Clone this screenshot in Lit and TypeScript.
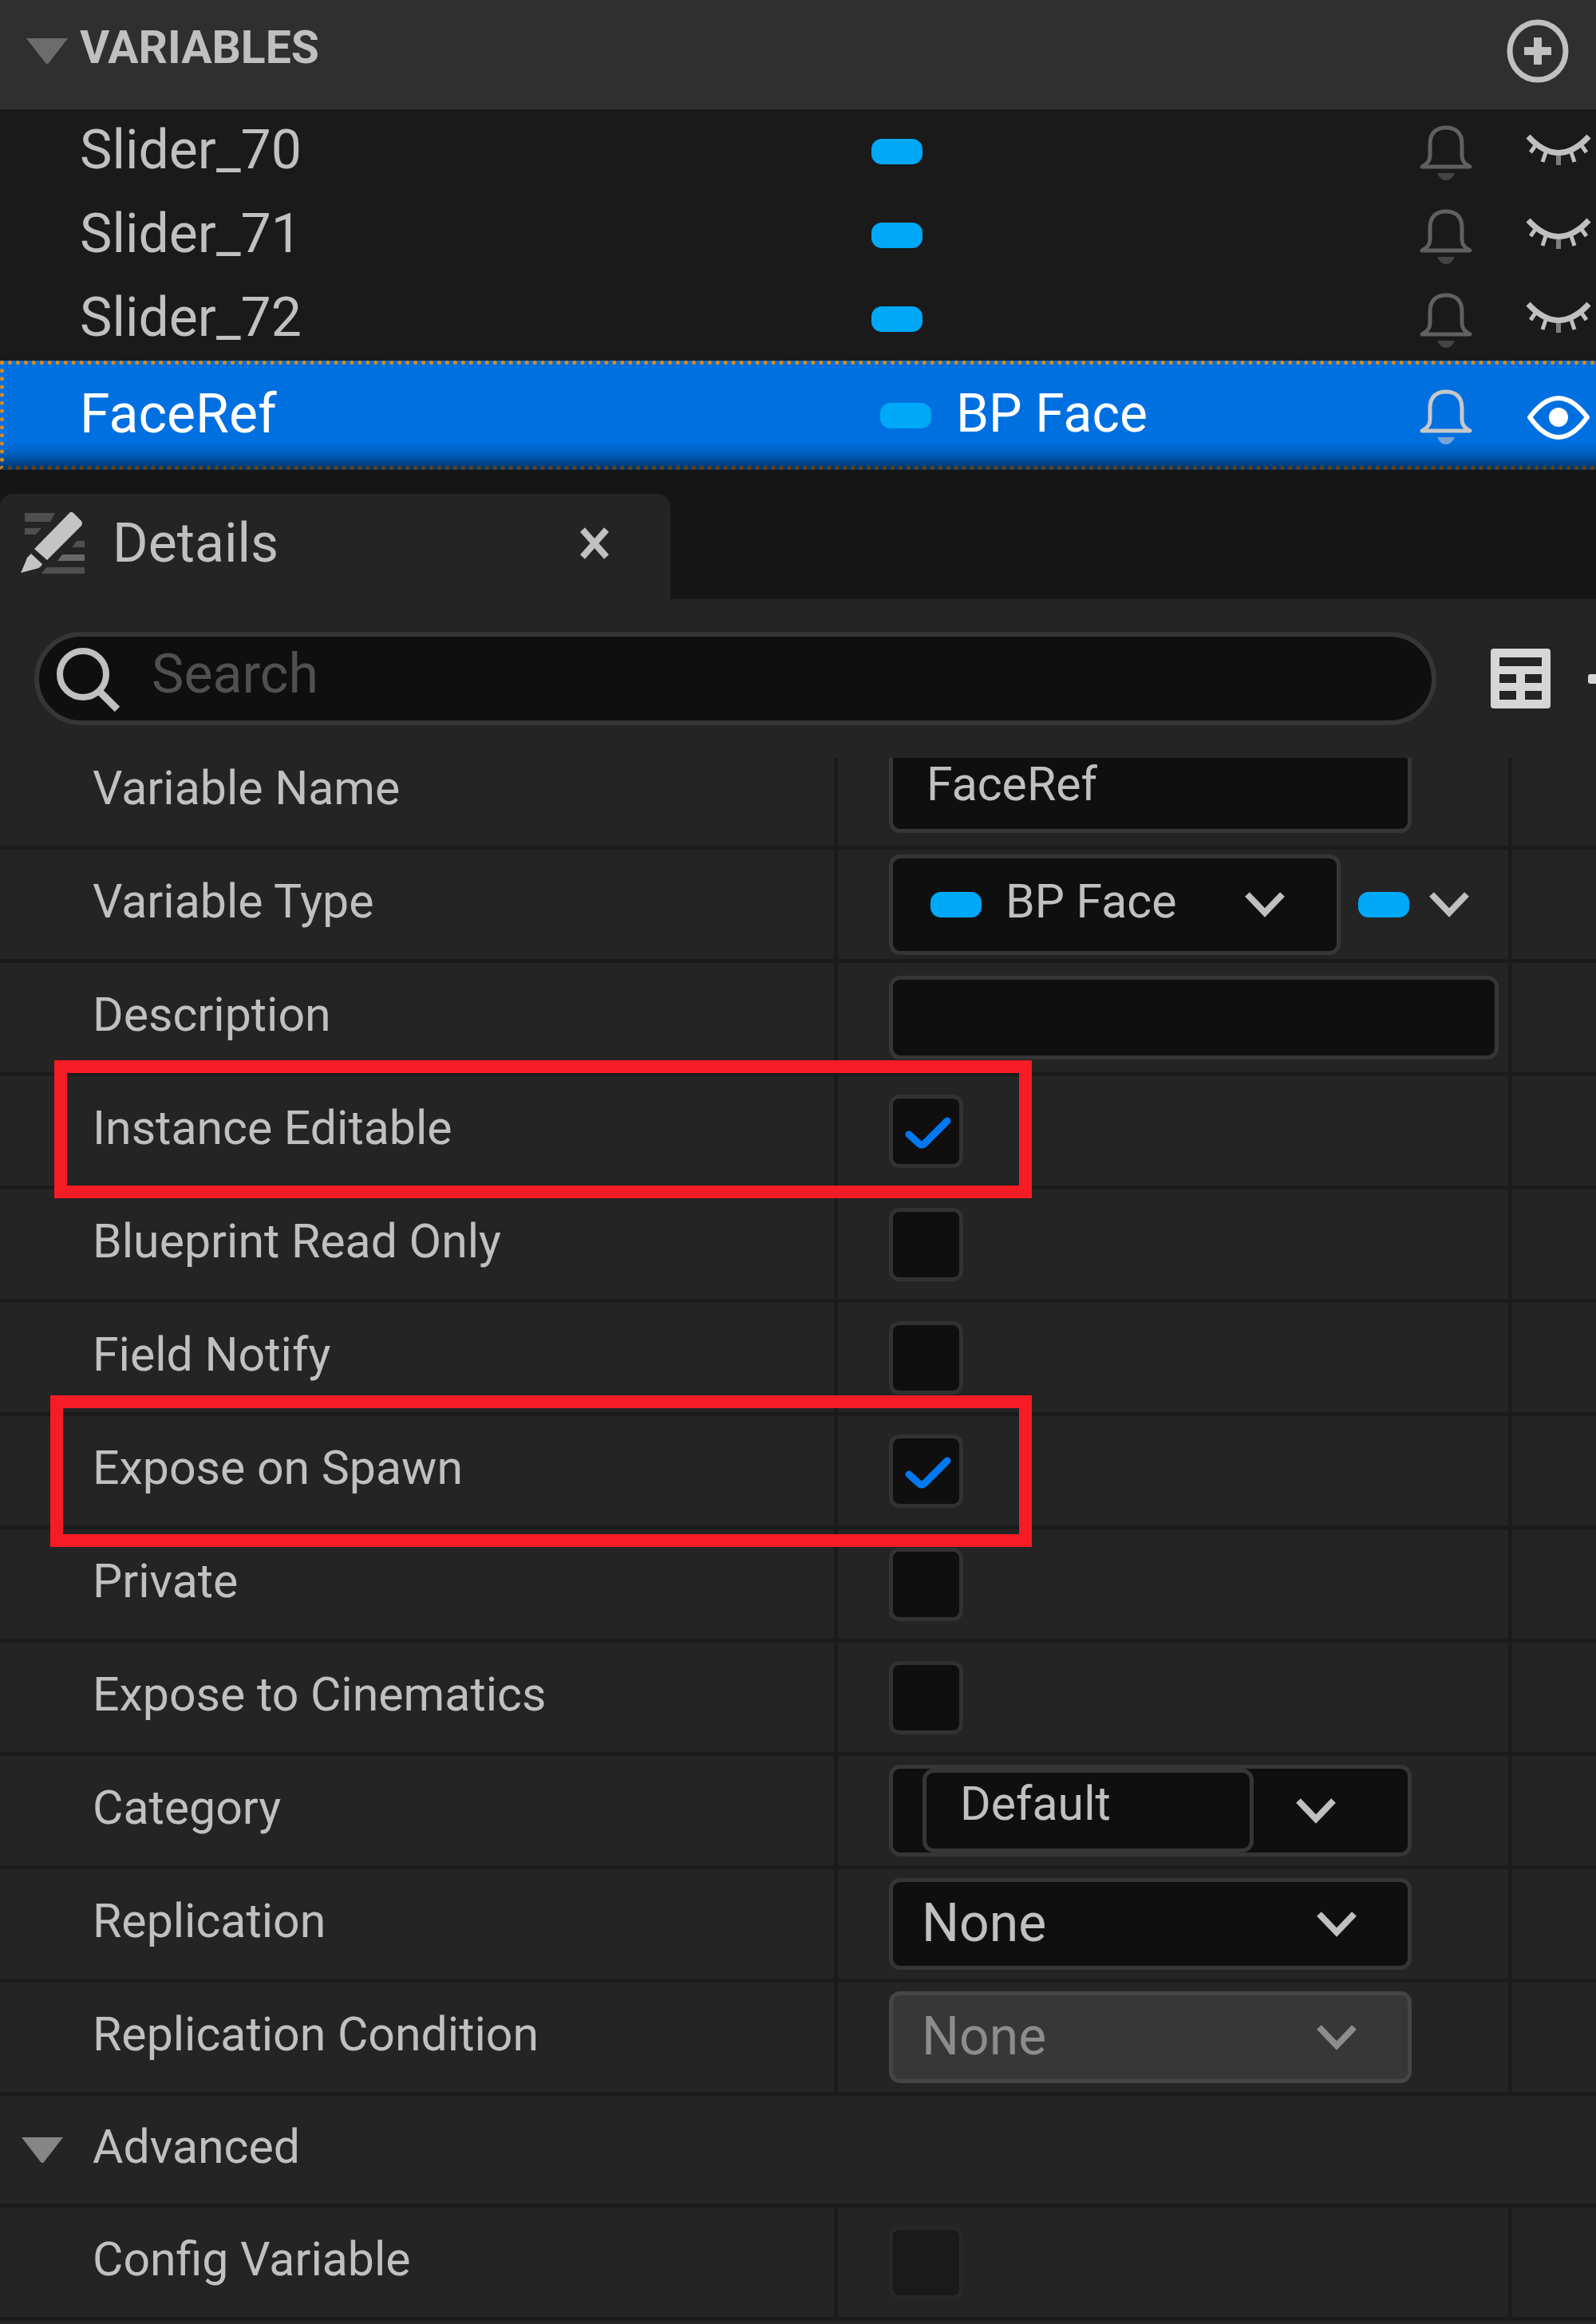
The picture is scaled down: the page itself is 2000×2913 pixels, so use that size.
import { LitElement, html, css, svg, nothing, type TemplateResult } from "lit";
import { customElement, state } from "lit/decorators.js";
import { classMap } from "lit/directives/class-map.js";

interface Variable {
  name: string;
  type?: string;
  visible: boolean;
}

interface Toggle {
  id: string;
  label: string;
  checked: boolean;
  mark?: "first" | "second";
}

const VARIABLES: Variable[] = [
  { name: "Slider_70", visible: false },
  { name: "Slider_71", visible: false },
  { name: "Slider_72", visible: false },
  { name: "FaceRef", type: "BP Face", visible: true },
];

const TOGGLES: Toggle[] = [
  { id: "instance-editable", label: "Instance Editable", checked: true, mark: "first" },
  { id: "read-only", label: "Blueprint Read Only", checked: false },
  { id: "field-notify", label: "Field Notify", checked: false },
  { id: "expose-spawn", label: "Expose on Spawn", checked: true, mark: "second" },
  { id: "private", label: "Private", checked: false },
  { id: "expose-cinematics", label: "Expose to Cinematics", checked: false },
];

const triangle = html`<svg class="triangle" viewBox="0 0 56 34" aria-hidden="true">
  <path d="M2 1H54L30 32Q28 34 26 32Z" fill="currentColor" />
</svg>`;

const chevron = html`<svg class="chevron" viewBox="0 0 52 34" aria-hidden="true">
  <path d="M4 4L26 27L48 4" fill="none" stroke="currentColor" stroke-width="8" />
</svg>`;

const plusCircle = html`<svg class="plus" viewBox="0 0 78 80" aria-hidden="true">
  <ellipse cx="39" cy="40" rx="35" ry="36" fill="none" stroke="currentColor" stroke-width="7" />
  <path d="M22 40H56M39 23V57" stroke="currentColor" stroke-width="10" />
</svg>`;

const bell = html`<svg class="bell" viewBox="0 0 66 74" aria-hidden="true">
  <path
    d="M3 56Q13 51 13 42V28C13 13 21 7 33 7S53 13 53 28V42Q53 51 63 56Z"
    fill="none" stroke="currentColor" stroke-width="5" stroke-linejoin="round" />
  <path d="M22 64H44Q40 73 33 73T22 64Z" fill="currentColor" opacity="0.6" />
</svg>`;

const eyeShut = html`<svg class="eye" viewBox="0 0 82 74" aria-hidden="true">
  <g fill="none" stroke="currentColor">
    <path d="M3 18Q41 59 79 18" stroke-width="7" />
    <path d="M13 28L6 38M69 28L76 38M25 38L21 50M57 38L61 50" stroke-width="5" />
    <path d="M41 40V54" stroke-width="6" opacity="0.6" />
  </g>
</svg>`;

const eyeOpen = html`<svg class="eye" viewBox="0 0 82 74" aria-hidden="true">
  <path d="M5 39Q23 15 41 15T77 39Q59 64 41 64T5 39Z" fill="none" stroke="currentColor" stroke-width="6" stroke-linejoin="round" />
  <circle cx="41" cy="39" r="12" fill="currentColor" />
</svg>`;

const pencil = html`<svg class="pencil" viewBox="0 0 80 80" aria-hidden="true">
  <g fill="#4f4f4f">
    <path d="M5 2H43L37 13H5Z" />
    <path d="M5 21H26L19 29H5Z" />
    <path d="M70 37H80V45H64Z" />
    <path d="M52 54H80V62H46Z" fill="#686868" />
    <path d="M32 70H80V78H26Z" />
  </g>
  <path d="M62 1Q64 0 66 2L76 12Q78 15 76 18L33 61L17 47Z" fill="#c4c4c4" />
  <path d="M13 53L27 66Q25 71 19 72L0 77Q5 66 8 58Z" fill="#c4c4c4" />
</svg>`;

const cross = html`<svg class="cross" viewBox="0 0 38 42" aria-hidden="true">
  <path d="M4 4L34 38M34 4L4 38" stroke="currentColor" stroke-width="8" />
</svg>`;

const lens = html`<svg class="lens" viewBox="0 0 80 82" aria-hidden="true">
  <circle cx="33" cy="35" r="29" fill="none" stroke="currentColor" stroke-width="8" />
  <path d="M53 56L76 79" stroke="currentColor" stroke-width="9" />
</svg>`;

const tableIcon = html`<svg class="table-icon" viewBox="0 0 75 75" aria-hidden="true">
  <path
    fill="currentColor" fill-rule="evenodd"
    d="M4 0H71Q75 0 75 4V71Q75 75 71 75H4Q0 75 0 71V4Q0 0 4 0ZM11 11V22H64V11ZM11 32V43H32V32ZM43 32V43H64V32ZM11 53V64H32V53ZM43 53V64H64V53Z" />
</svg>`;

const teeth = [0, 45, 90, 135, 180, 225, 270, 315];
const gear = html`<svg class="gear" viewBox="0 0 76 76" aria-hidden="true">
  ${teeth.map((a) => svg`<rect x=${a % 90 ? 5 : 0} y="32" width="16" height="12" rx="3" fill="currentColor" transform="rotate(${a} 38 38)" />`)}
  <circle cx="38" cy="38" r="20" fill="none" stroke="currentColor" stroke-width="12" />
</svg>`;

const tick = html`<svg class="tick" viewBox="0 0 93 92" aria-hidden="true">
  <path d="M25 50L37 61Q41 65 45 61L73 33" fill="none" stroke="currentColor" stroke-width="9" stroke-linecap="round" stroke-linejoin="round" />
</svg>`;

@customElement("app-root")
export class AppRoot extends LitElement {
  @state() private selected = "FaceRef";
  @state() private toggles = TOGGLES;

  static styles = css`
    :host {
      display: block;
      min-height: 100vh;
      overflow: hidden;
      background: #242424;
      color: #c0c0c0;
      font-family: Roboto, "Liberation Sans", sans-serif;
      font-size: 59px;
      line-height: 72px;
    }
    * {
      box-sizing: border-box;
    }
    button,
    input,
    select {
      margin: 0;
      padding: 0;
      border: 0;
      background: none;
      color: inherit;
      font: inherit;
      outline: none;
      appearance: none;
    }
    svg {
      display: block;
      flex: none;
    }
    h2 {
      margin: 0;
      font: inherit;
    }

    /* Variables list */
    .section-head {
      display: flex;
      align-items: center;
      justify-content: space-between;
      height: 137px;
      padding: 0 34px 10px 31px;
      background: #2f2f2f;
    }
    .section-toggle {
      display: flex;
      align-items: center;
      gap: 13px;
      font-size: 57px;
      font-weight: 700;
    }
    .section-toggle .title {
      padding-bottom: 7px;
    }
    .triangle {
      width: 56px;
      height: 34px;
      color: #6c6c6c;
    }
    .plus {
      width: 78px;
      height: 80px;
    }
    .variables {
      margin: 0;
      padding: 0;
      list-style: none;
      background: #1a1a1a;
      font-size: 68px;
    }
    .variable {
      position: relative;
      display: grid;
      grid-template-columns: minmax(0, 1092fr) minmax(0, 687fr) minmax(0, 221fr);
      align-items: center;
      height: 105px;
    }
    .variable .name {
      padding: 0 0 4px 100px;
      text-align: left;
    }
    .kind {
      display: flex;
      align-items: center;
      gap: 31px;
    }
    .kind .kind-name {
      padding-bottom: 4px;
      font-size: 66px;
    }
    .flags {
      display: flex;
      justify-content: space-between;
      padding-right: 6px;
    }
    .bell {
      width: 66px;
      height: 74px;
      color: #606060;
    }
    .eye {
      width: 82px;
      height: 74px;
    }
    .pill {
      flex: none;
      width: 64px;
      height: 32px;
      border-radius: 13px;
      background: #00a8f8;
    }
    .variable.selected {
      height: 137px;
      background: linear-gradient(#0070e0 0, #0070e0 74%, #0062c4 84%, #003f80 96%, #003468 100%);
      color: #fff;
    }
    .variable.selected::after {
      content: "";
      position: absolute;
      inset: 0;
      border: 5px dotted #e08a12;
      border-right: 0;
      border-bottom-color: #6b430c;
      pointer-events: none;
    }
    .selected .kind {
      padding-left: 11px;
    }
    .selected .bell {
      color: #c6c8cc;
    }

    /* Tab strip */
    .tabs {
      padding-top: 30px;
      background: #151515;
    }
    .tab {
      display: flex;
      align-items: center;
      width: 42%;
      height: 132px;
      padding: 0 76px 8px 26px;
      border-radius: 16px 16px 0 0;
      background: #242424;
      font-size: 68px;
    }
    .tab .title {
      flex: 1;
      padding-left: 35px;
    }
    .pencil {
      width: 80px;
      height: 80px;
    }
    .cross {
      width: 38px;
      height: 42px;
    }

    /* Search bar */
    .tools {
      display: flex;
      align-items: center;
      padding: 41px 0 41px 43px;
    }
    .search {
      display: flex;
      flex: 1;
      align-items: center;
      gap: 39px;
      height: 117px;
      padding: 0 40px 0 22px;
      border: 6px solid #363636;
      border-radius: 59px;
      background: #0f0f0f;
    }
    .search input {
      flex: 1;
      min-width: 0;
      height: 100%;
      padding-bottom: 12px;
      font-size: 68px;
    }
    .search input::placeholder {
      color: #505050;
      opacity: 1;
    }
    .lens {
      width: 80px;
      height: 82px;
    }
    .tool {
      margin-left: 68px;
      color: #d6d6d6;
    }
    .tool-edge {
      margin: 0 -66px 0 47px;
      color: #d6d6d6;
    }
    .table-icon {
      width: 75px;
      height: 75px;
    }
    .gear {
      width: 76px;
      height: 76px;
    }

    /* Property rows */
    .properties {
      overflow: hidden;
    }
    .row {
      position: relative;
      display: grid;
      grid-template-columns: minmax(0, 1050fr) minmax(0, 845fr) minmax(0, 105fr);
      height: 142px;
      border-bottom: 5px solid #1b1b1b;
    }
    .row.scrolled {
      margin-top: -27px;
    }
    .caption,
    .value {
      display: flex;
      align-items: center;
      border-right: 5px solid #1b1b1b;
    }
    .caption {
      padding: 0 0 8px 116px;
    }
    .value {
      gap: 22px;
      padding: 0 12px 0 64px;
    }
    .field {
      width: 655px;
      height: 105px;
      padding: 0 42px 18px;
      border: 5px solid #363636;
      border-radius: 14px;
      background: #0f0f0f;
    }
    .field.wide {
      width: 100%;
    }
    .picker {
      display: flex;
      align-items: center;
      width: 566px;
      height: 126px;
      padding: 0 64px 0 47px;
      border: 5px solid #363636;
      border-radius: 14px;
      background: #0f0f0f;
    }
    .picker .picked {
      flex: 1;
      padding: 0 0 8px 30px;
      text-align: left;
    }
    .container-picker {
      display: flex;
      align-items: center;
      gap: 24px;
    }
    .chevron {
      width: 52px;
      height: 34px;
    }
    .combo {
      display: flex;
      align-items: center;
      width: 655px;
      height: 115px;
      padding-left: 37px;
      border: 5px solid #363636;
      border-radius: 14px;
      background: #0f0f0f;
    }
    .combo .field {
      width: 415px;
      margin-right: 52px;
    }
    .choice {
      display: grid;
      align-items: center;
      width: 655px;
      font-size: 66px;
    }
    .choice select {
      grid-area: 1 / 1;
      height: 115px;
      padding: 0 120px 2px 36px;
      border: 5px solid #363636;
      border-radius: 14px;
      background: #0f0f0f;
      opacity: 1;
    }
    .choice .chevron {
      grid-area: 1 / 1;
      justify-self: end;
      margin-right: 68px;
      pointer-events: none;
    }
    .choice.off {
      color: #8c8c8c;
    }
    .choice.off select {
      border-color: #454545;
      background: #373737;
    }
    .box {
      display: grid;
    }
    .box input {
      grid-area: 1 / 1;
      width: 93px;
      height: 92px;
      border: 5px solid #323232;
      border-radius: 13px;
      background: #0f0f0f;
    }
    .box input:disabled {
      border-color: #282828;
      background: #1a1a1a;
    }
    .tick {
      grid-area: 1 / 1;
      width: 93px;
      height: 92px;
      color: #0078f0;
      pointer-events: none;
    }
    .mark {
      position: absolute;
      z-index: 1;
      right: 707px;
      border: 16px solid #f51c25;
      pointer-events: none;
    }
    .mark.first {
      top: -20px;
      bottom: -16px;
      left: 68px;
    }
    .mark.second {
      top: -26px;
      bottom: -27px;
      left: 63px;
    }
    .group {
      display: flex;
      align-items: center;
      width: 100%;
      height: 140px;
      padding-left: 25px;
      border-bottom: 5px solid #1b1b1b;
    }
    .group .triangle {
      color: #868686;
    }
    .group .title {
      padding: 0 0 8px 35px;
    }
  `;

  private variableRow(v: Variable): TemplateResult {
    return html`<li class=${classMap({ variable: true, selected: v.name === this.selected })}>
      <button class="name" type="button" @click=${() => (this.selected = v.name)}>${v.name}</button>
      <div class="kind">
        <span class="pill"></span>
        ${v.type ? html`<span class="kind-name">${v.type}</span>` : nothing}
      </div>
      <div class="flags">
        <button type="button" aria-label="Notify">${bell}</button>
        <button type="button" aria-label="Visibility">${v.visible ? eyeOpen : eyeShut}</button>
      </div>
    </li>`;
  }

  private row(id: string, label: string, value: TemplateResult, extra = "", mark = ""): TemplateResult {
    return html`<div class="row ${extra}">
      <label class="caption" for=${id}>${label}</label>
      <div class="value">${value}</div>
      ${mark ? html`<div class="mark ${mark}"></div>` : nothing}
    </div>`;
  }

  private flip(id: string) {
    this.toggles = this.toggles.map((t) => (t.id === id ? { ...t, checked: !t.checked } : t));
  }

  private toggleRow(t: Toggle): TemplateResult {
    return this.row(
      t.id,
      t.label,
      html`<span class="box">
        <input id=${t.id} type="checkbox" .checked=${t.checked} @change=${() => this.flip(t.id)} />
        ${t.checked ? tick : nothing}
      </span>`,
      "",
      t.mark ?? "",
    );
  }

  render() {
    return html`
      <section>
        <header class="section-head">
          <button class="section-toggle" type="button" aria-expanded="true">
            ${triangle}<span class="title">VARIABLES</span>
          </button>
          <button type="button" aria-label="Add variable">${plusCircle}</button>
        </header>
        <ul class="variables">
          ${VARIABLES.map((v) => this.variableRow(v))}
        </ul>
      </section>

      <section>
        <div class="tabs">
          <div class="tab">
            ${pencil}
            <h2 class="title">Details</h2>
            <button type="button" aria-label="Close tab">${cross}</button>
          </div>
        </div>

        <div class="tools">
          <label class="search">
            ${lens}
            <input type="text" placeholder="Search" aria-label="Search" />
          </label>
          <button class="tool" type="button" aria-label="Property matrix">${tableIcon}</button>
          <button class="tool-edge" type="button" aria-label="Settings">${gear}</button>
        </div>

        <div class="properties">
          ${this.row("var-name", "Variable Name", html`<input class="field" id="var-name" type="text" .value=${"FaceRef"} />`, "scrolled")}
          ${this.row(
            "var-type",
            "Variable Type",
            html`<button class="picker" id="var-type" type="button">
                <span class="pill"></span><span class="picked">BP Face</span>${chevron}
              </button>
              <button class="container-picker" type="button" aria-label="Container type">
                <span class="pill"></span>${chevron}
              </button>`,
          )}
          ${this.row("description", "Description", html`<input class="field wide" id="description" type="text" />`)}
          ${this.toggles.map((t) => this.toggleRow(t))}
          ${this.row(
            "category",
            "Category",
            html`<div class="combo">
              <input class="field" id="category" type="text" .value=${"Default"} />
              <button type="button" aria-label="Choose category">${chevron}</button>
            </div>`,
          )}
          ${this.row(
            "replication",
            "Replication",
            html`<div class="choice">
              <select id="replication"><option>None</option></select>
              ${chevron}
            </div>`,
          )}
          ${this.row(
            "replication-condition",
            "Replication Condition",
            html`<div class="choice off">
              <select id="replication-condition" disabled><option>None</option></select>
              ${chevron}
            </div>`,
          )}
          <button class="group" type="button" aria-expanded="true">
            ${triangle}<span class="title">Advanced</span>
          </button>
          ${this.row("config-variable", "Config Variable", html`<span class="box"><input id="config-variable" type="checkbox" disabled /></span>`)}
        </div>
      </section>
    `;
  }
}
